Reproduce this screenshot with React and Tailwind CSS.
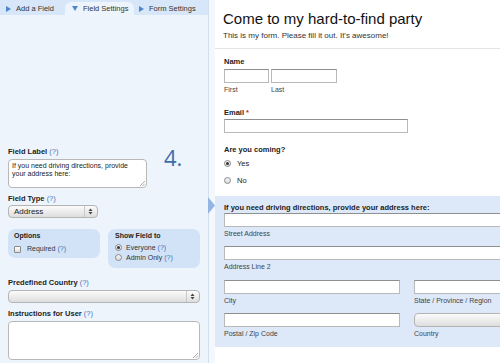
import React from "react";

const Help = () => <span className="font-normal text-[#3f72b8]">(?)</span>;

function TabArrow({ down }) {
  return down ? (
    <svg width="6" height="5" viewBox="0 0 6 5" className="mr-[5px]">
      <path d="M0 0 L6 0 L3 5 Z" fill="#4f86cc" />
    </svg>
  ) : (
    <svg width="5" height="6" viewBox="0 0 5 6" className="mr-[5px]">
      <path d="M0 0 L5 3 L0 6 Z" fill="#4f86cc" />
    </svg>
  );
}

function Grip() {
  return (
    <svg width="6" height="6" viewBox="0 0 6 6" className="absolute right-[1px] bottom-[1px]">
      <path d="M1 6 L6 1 M3.5 6 L6 3.5" stroke="#9a9a9a" strokeWidth="0.8" />
    </svg>
  );
}

function Updown() {
  return (
    <svg width="5" height="7" viewBox="0 0 5 7">
      <path d="M0.5 3 L2.5 0.5 L4.5 3 Z M0.5 4 L2.5 6.5 L4.5 4 Z" fill="#444" />
    </svg>
  );
}

function Radio({ checked }) {
  return (
    <span className="w-[7px] h-[7px] rounded-full border border-[#8a8a8a] bg-gradient-to-b from-[#f4f4f4] to-[#dcdcdc] flex items-center justify-center">
      {checked && <span className="w-[3px] h-[3px] rounded-full bg-[#333]" />}
    </span>
  );
}

function SelectBox({ w, children }) {
  return (
    <div
      className={`${w} h-[13px] rounded-[4px] border border-[#b4b4b4] bg-gradient-to-b from-[#fbfbfb] to-[#dedede] flex items-center pl-[5px] pr-[4px] text-[8px] text-[#222]`}
    >
      <span className="flex-1">{children}</span>
      <span className="w-px h-full bg-[#c8c8c8] mr-[3px]" />
      <Updown />
    </div>
  );
}

function Input({ w }) {
  return (
    <div className={`${w} h-[14px] bg-white border border-[#b9b9b9] border-t-[#8f8f8f]`} />
  );
}

function Sub({ children }) {
  return <div className="text-[7px] leading-[8px] text-[#444] mt-[3px]">{children}</div>;
}

export default function App() {
  return (
    <div className="w-[500px] h-[363px] overflow-hidden flex bg-white font-['Liberation_Sans',Arial,sans-serif] text-[#222]">
      <aside className="w-[209px] shrink-0 bg-[#eef4fc] border-r border-[#d3dfee] flex flex-col">
        <div className="h-[15px] bg-[#d7e7f9] flex items-end text-[7.5px] text-[#333]">
          <div className="flex items-center h-[13px] pl-[6px] w-[65px]">
            <TabArrow />
            Add a Field
          </div>
          <div className="flex items-center h-[13px] pl-[7px] w-[69px] rounded-t-[6px] bg-[#eef4fc]">
            <TabArrow down />
            Field Settings
          </div>
          <div className="flex items-center h-[13px] pl-[5px]">
            <TabArrow />
            Form Settings
          </div>
        </div>

        <div className="pl-[8px] pr-[8px] pt-[132px] flex flex-col">
          <div className="text-[7.5px] font-bold leading-[9px]">
            Field Label <Help />
          </div>
          <div className="flex items-start mt-[3px]">
            <div className="relative w-[139px] h-[29px] bg-white rounded-[4px] border border-[#b8b8b8] px-[3px] pt-[2px] text-[7px] leading-[8px] text-[#222]">
              If you need driving directions, provide your address here:
              <Grip />
            </div>
            <div className="ml-[17px] -mt-[14px] text-[22px] leading-[24px] text-[#3d6eaa] font-['Open_Sans',sans-serif]">
              4.
            </div>
          </div>

          <div className="text-[7.5px] font-bold leading-[9px] mt-[6px]">
            Field Type <Help />
          </div>
          <div className="mt-[2px]">
            <SelectBox w="w-[90px]">Address</SelectBox>
          </div>

          <div className="flex items-start mt-[11px] gap-[8px]">
            <div className="w-[92px] h-[29px] rounded-[7px] bg-[#d2e3f8] px-[6px] pt-[2px] text-[7px]">
              <div className="font-bold leading-[9px]">Options</div>
              <div className="flex items-center mt-[4px] text-[#333]">
                <span className="w-[7px] h-[7px] rounded-[1px] border border-[#8a8a8a] bg-gradient-to-b from-white to-[#dedede] mr-[6px]" />
                Required <span className="ml-[2px] text-[#3f72b8]">(?)</span>
              </div>
            </div>
            <div className="w-[92px] h-[39px] rounded-[7px] bg-[#d2e3f8] px-[7px] pt-[2px] text-[7px]">
              <div className="font-bold leading-[9px]">Show Field to</div>
              <div className="flex items-center gap-[4px] mt-[3px] leading-[9px] text-[#333]">
                <Radio checked />
                Everyone <span className="text-[#3f72b8] -ml-[2px]">(?)</span>
              </div>
              <div className="flex items-center gap-[4px] mt-[1px] leading-[9px] text-[#333]">
                <Radio />
                Admin Only <span className="text-[#3f72b8] -ml-[2px]">(?)</span>
              </div>
            </div>
          </div>

          <div className="text-[7.5px] font-bold leading-[9px] mt-[10px]">
            Predefined Country <Help />
          </div>
          <div className="mt-[3px]">
            <SelectBox w="w-[192px]"></SelectBox>
          </div>

          <div className="text-[7.5px] font-bold leading-[9px] mt-[6px]">
            Instructions for User <Help />
          </div>
          <div className="relative mt-[3px] w-[192px] h-[39px] bg-white rounded-[4px] border border-[#b8b8b8]">
            <Grip />
          </div>
        </div>
      </aside>

      <div className="w-[6px] shrink-0 bg-[#f4f8fd]" />

      <main className="flex-1 flex flex-col">
        <div className="pl-[8px] pt-[9px] pb-[8px] border-b border-[#e4e4e4]">
          <h1 className="text-[15px] leading-[20px] text-[#111]">Come to my hard-to-find party</h1>
          <p className="text-[8px] leading-[9px] text-[#333] mt-[2px]">
            This is my form. Please fill it out. It's awesome!
          </p>
        </div>

        <div className="pl-[9px] pt-[8px]">
          <div className="text-[7.5px] font-bold leading-[9px]">Name</div>
          <div className="flex gap-[2px] mt-[3px]">
            <div>
              <Input w="w-[45px]" />
              <Sub>First</Sub>
            </div>
            <div>
              <Input w="w-[66px]" />
              <Sub>Last</Sub>
            </div>
          </div>

          <div className="text-[7.5px] font-bold leading-[9px] mt-[14px]">
            Email <span className="text-[#d02020]">*</span>
          </div>
          <div className="mt-[2px]">
            <Input w="w-[184px]" />
          </div>

          <div className="text-[7.5px] font-bold leading-[9px] mt-[12px]">Are you coming?</div>
          <div className="flex items-center gap-[6px] mt-[5px] text-[7.5px] leading-[9px]">
            <Radio checked />
            Yes
          </div>
          <div className="flex items-center gap-[6px] mt-[8px] text-[7.5px] leading-[9px]">
            <Radio />
            No
          </div>
        </div>

        <section className="relative mt-[11px] bg-[#dde9f9] pl-[9px] pt-[7px] pb-[9px]">
          <svg width="7" height="17" viewBox="0 0 7 17" className="absolute -left-[7px] top-[1px]">
            <path d="M0 0 L7 8.5 L0 17 Z" fill="#92b5e4" />
          </svg>
          <div className="text-[7.5px] font-bold leading-[9px]">
            If you need driving directions, provide your address here:
          </div>
          <div className="mt-[1px]">
            <Input w="w-[300px]" />
          </div>
          <Sub>Street Address</Sub>
          <div className="mt-[8px]">
            <Input w="w-[300px]" />
          </div>
          <Sub>Address Line 2</Sub>
          <div className="flex gap-[14px] mt-[9px]">
            <div>
              <Input w="w-[176px]" />
              <Sub>City</Sub>
            </div>
            <div>
              <Input w="w-[120px]" />
              <Sub>State / Province / Region</Sub>
            </div>
          </div>
          <div className="flex gap-[14px] mt-[8px]">
            <div>
              <Input w="w-[176px]" />
              <Sub>Postal / Zip Code</Sub>
            </div>
            <div>
              <div className="w-[120px] h-[14px] rounded-[4px] border border-[#b4b4b4] bg-gradient-to-b from-[#fbfbfb] to-[#dedede]" />
              <Sub>Country</Sub>
            </div>
          </div>
        </section>
      </main>
    </div>
  );
}
